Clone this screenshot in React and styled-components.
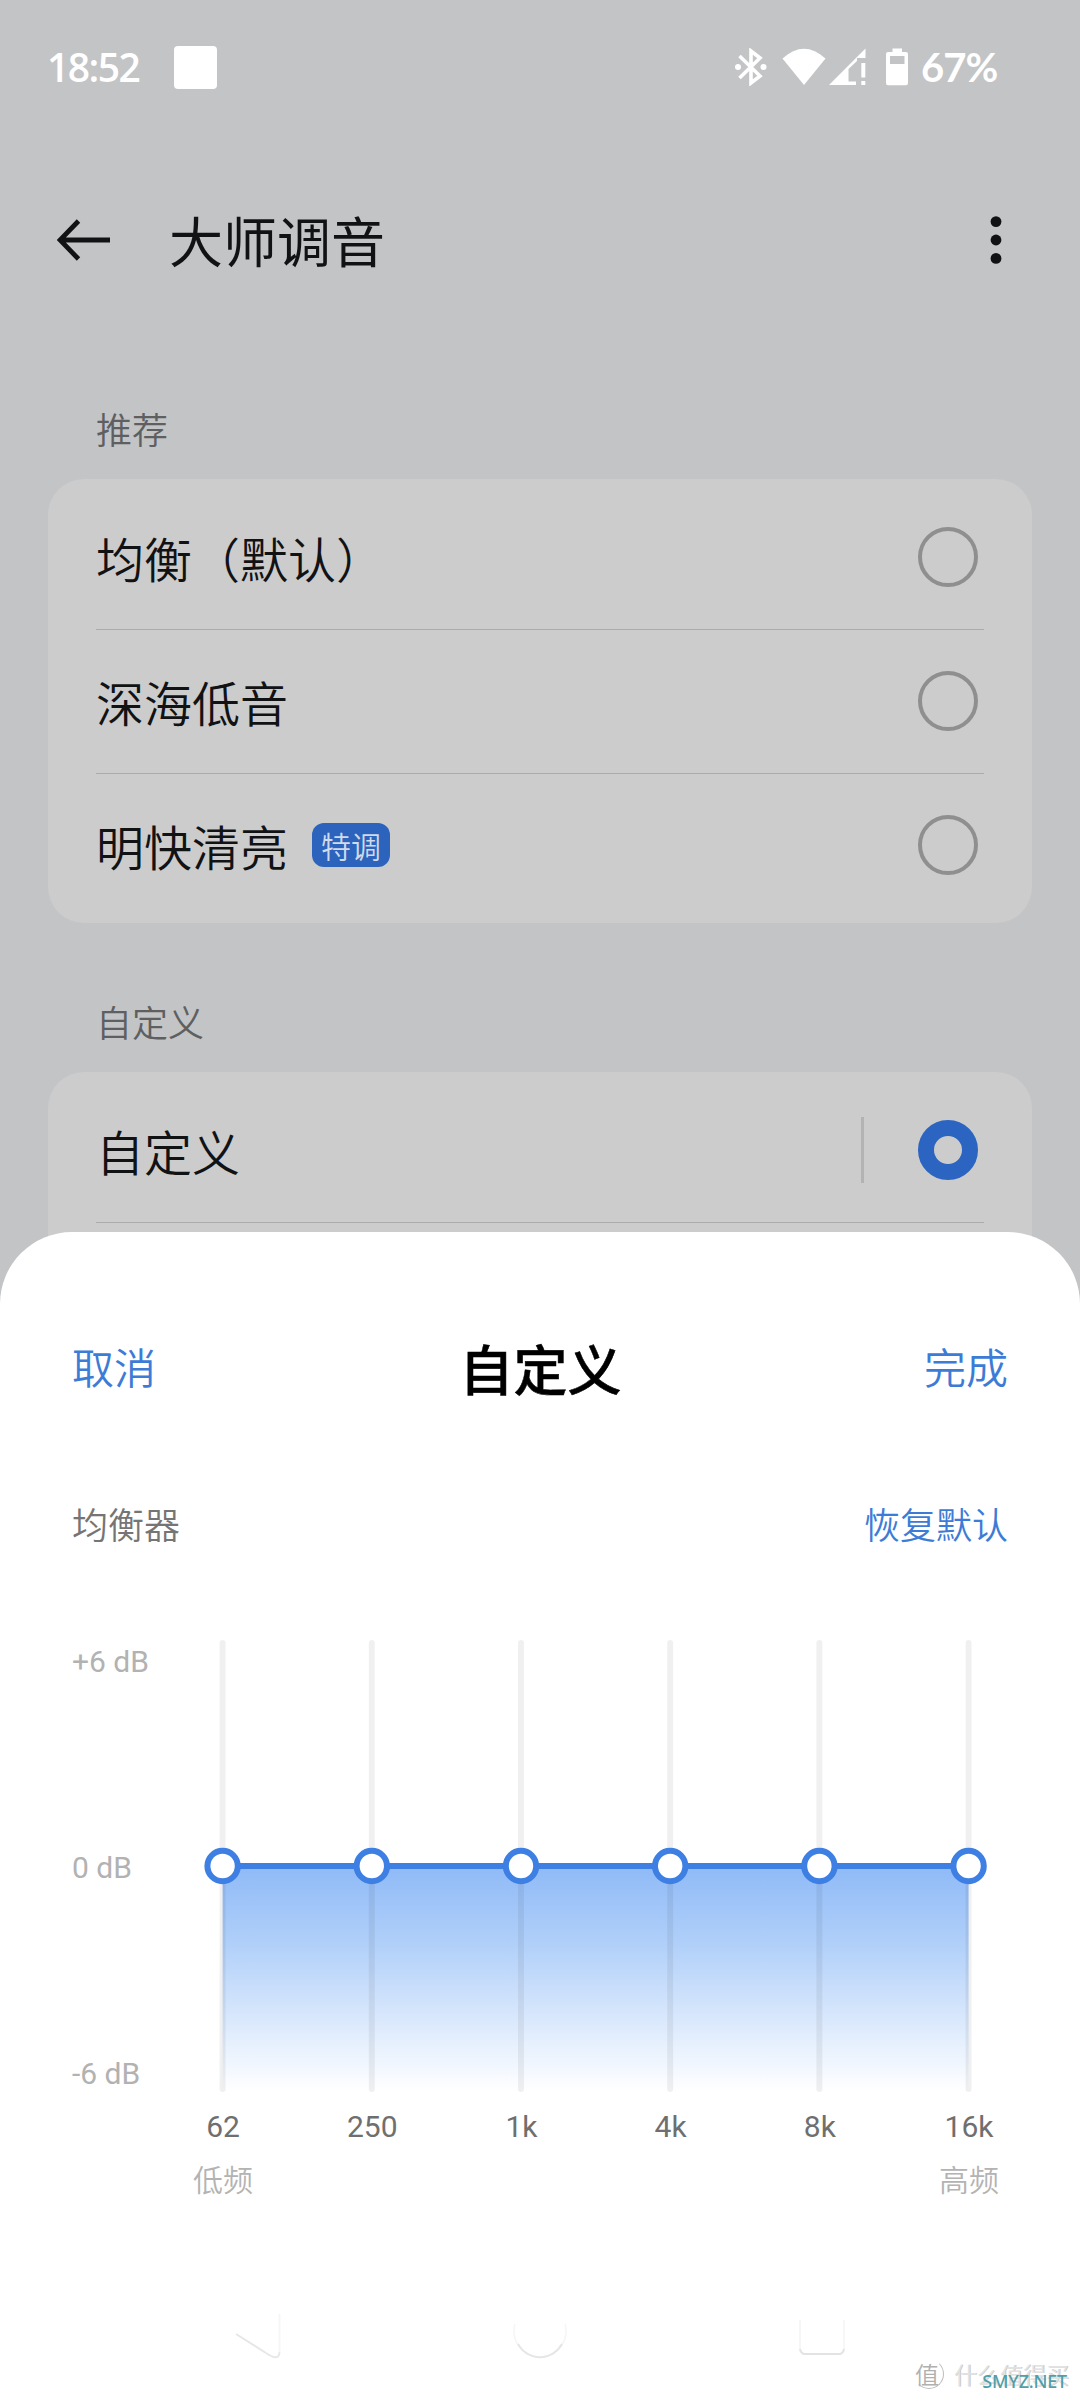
import React, { useState } from "react";
import styled, { createGlobalStyle, css } from "styled-components";

const presets = [
	{ id: "balance", name: "均衡（默认）" },
	{ id: "bass", name: "深海低音" },
	{ id: "bright", name: "明快清亮", tag: "特调" },
];

const bands = [
	{ freq: "62", gain: 0, hint: "低频" },
	{ freq: "250", gain: 0 },
	{ freq: "1k", gain: 0 },
	{ freq: "4k", gain: 0 },
	{ freq: "8k", gain: 0 },
	{ freq: "16k", gain: 0, hint: "高频" },
];

const BAND_WIDTH = 149.2;
const CHART_HEIGHT = 452;
const MAX_GAIN = 6;

const bandX = (index) => BAND_WIDTH * (index + 0.5);
const gainY = (gain) => CHART_HEIGHT / 2 - (gain / MAX_GAIN) * 206;

const BluetoothIcon = () => (
	<svg width="32" height="38" viewBox="0 0 32 38" fill="none">
		<path d="M4.5 8 L25 28 L16 35 V3 L25 10 L4.5 30" stroke="#fff" strokeWidth="3.6" />
		<circle cx="3" cy="19" r="3" fill="#fff" />
		<circle cx="28.5" cy="19" r="3" fill="#fff" />
	</svg>
);

const WifiIcon = () => (
	<svg width="44" height="38" viewBox="0 0 44 38">
		<path d="M0.5 10.5 Q22 -9 43.5 10.5 L22 37 Z" fill="#fff" />
	</svg>
);

const SignalIcon = () => (
	<svg width="37" height="38" viewBox="0 0 37 38" fill="#fff">
		<path d="M0 37 L36.5 0.5 V10 H28 V13 L19.5 21 V33.5 H27 V37 Z" />
		<rect x="32.3" y="15" width="4" height="14.5" />
		<rect x="32.3" y="33" width="4" height="4" />
	</svg>
);

const BatteryIcon = () => (
	<svg width="22" height="38" viewBox="0 0 22 38">
		<path
			fillRule="evenodd"
			d="M6.5 0.5 H16 V4 H20 Q22 4 22 6 V35 Q22 37.3 20 37.3 H2 Q0 37.3 0 35 V6 Q0 4 2 4 H6.5 Z M4 8 V16 H18.5 V8 Z"
			fill="#fff"
		/>
	</svg>
);

const BackIcon = () => (
	<svg width="54" height="42" viewBox="0 0 54 42" fill="none">
		<path d="M21.5 2 L3 21 L21.5 40 M3 21 H53" stroke="#111214" strokeWidth="4.8" />
	</svg>
);

const MoreIcon = () => (
	<svg width="12" height="50" viewBox="0 0 12 50" fill="#111214">
		<circle cx="6" cy="6.6" r="5.4" />
		<circle cx="6" cy="25" r="5.4" />
		<circle cx="6" cy="43.4" r="5.4" />
	</svg>
);

const Equalizer = () => {
	const width = BAND_WIDTH * bands.length;
	const line = bands.map((band, i) => `${bandX(i)},${gainY(band.gain)}`).join(" ");
	const area = `${bandX(0)},${CHART_HEIGHT} ${line} ${bandX(bands.length - 1)},${CHART_HEIGHT}`;

	return (
		<svg width={width} height={CHART_HEIGHT} viewBox={`0 0 ${width} ${CHART_HEIGHT}`}>
			<defs>
				<linearGradient id="gain" x1="0" y1="0" x2="0" y2="1">
					<stop offset="0" stopColor="#8fbaf7" />
					<stop offset="0.35" stopColor="#b1d0f9" />
					<stop offset="0.65" stopColor="#d6e6fc" />
					<stop offset="1" stopColor="#ffffff" />
				</linearGradient>
			</defs>
			<polygon points={area} fill="url(#gain)" />
			{bands.map((band, i) => (
				<rect
					key={band.freq}
					x={bandX(i) - 3}
					y="0"
					width="6"
					height={CHART_HEIGHT}
					rx="3"
					fill="#000"
					fillOpacity="0.06"
				/>
			))}
			<polyline points={line} fill="none" stroke="#3d7fe2" strokeWidth="6" />
			{bands.map((band, i) => (
				<circle
					key={band.freq}
					cx={bandX(i)}
					cy={gainY(band.gain)}
					r="15.2"
					fill="#fff"
					stroke="#3d7fe2"
					strokeWidth="6"
				/>
			))}
		</svg>
	);
};

const App = () => {
	const [selected, setSelected] = useState("custom");

	return (
		<Screen>
			<GlobalStyle />
			<StatusBar>
				<Clock>18:52</Clock>
				<Notification />
				<StatusIcons>
					<BluetoothIcon />
					<WifiIcon />
					<SignalIcon />
					<BatteryIcon />
				</StatusIcons>
				<BatteryLevel>67%</BatteryLevel>
			</StatusBar>
			<AppBar>
				<BackIcon />
				<PageTitle>大师调音</PageTitle>
				<MoreIcon />
			</AppBar>

			<SectionLabel $top={54}>推荐</SectionLabel>
			<Card>
				{presets.map((preset) => (
					<Row key={preset.id} onClick={() => setSelected(preset.id)}>
						<RowName>{preset.name}</RowName>
						{preset.tag && <Tag>{preset.tag}</Tag>}
						<Radio $checked={selected === preset.id} />
					</Row>
				))}
			</Card>

			<SectionLabel $top={71}>自定义</SectionLabel>
			<Card>
				<Row onClick={() => setSelected("custom")}>
					<RowName>自定义</RowName>
					<Separator />
					<Radio $checked={selected === "custom"} />
				</Row>
				<Row />
			</Card>

			<Sheet>
				<SheetHeader>
					<TextButton>取消</TextButton>
					<SheetTitle>自定义</SheetTitle>
					<TextButton>完成</TextButton>
				</SheetHeader>
				<SubHeader>
					<span>均衡器</span>
					<ResetButton>恢复默认</ResetButton>
				</SubHeader>
				<Chart>
					<Scale>
						<span>+6 dB</span>
						<span>0 dB</span>
						<span>-6 dB</span>
					</Scale>
					<Equalizer />
				</Chart>
				<Axis>
					{bands.map((band) => (
						<Band key={band.freq}>
							{band.freq}
							{band.hint && <Hint>{band.hint}</Hint>}
						</Band>
					))}
				</Axis>
				<NavBar>
					<svg width="54" height="64" viewBox="0 0 54 64" fill="none">
						<path d="M5 34 L35 53" stroke="#e6e6e6" strokeWidth="2" />
						<path d="M35 53 Q48 62 48.5 52" stroke="#e8e8e8" strokeWidth="2" />
						<path d="M48.5 52 V14" stroke="#f6f6f6" strokeWidth="2" />
					</svg>
					<svg width="54" height="64" viewBox="0 0 54 64" fill="none">
						<path d="M2 24 A25 25 0 0 0 6 46" stroke="#f5f5f5" strokeWidth="1.5" />
						<path d="M48 46 A25 25 0 0 0 52 24" stroke="#f5f5f5" strokeWidth="1.5" />
						<path d="M5 44 A25 25 0 0 0 49 44" stroke="#e6e6e6" strokeWidth="2" />
					</svg>
					<svg width="54" height="64" viewBox="0 0 54 64" fill="none">
						<path d="M5 20 V50 M49 20 V50" stroke="#f5f5f5" strokeWidth="1.5" />
						<path d="M5 49 Q6 54 10 54 H44 Q48 54 49 49" stroke="#e3e3e3" strokeWidth="2" />
					</svg>
				</NavBar>
			</Sheet>

			<Watermark>
				<Seal>值</Seal>
				<span>什么值得买</span>
				<Site>SMYZ.NET</Site>
			</Watermark>
		</Screen>
	);
};

export default App;

const GlobalStyle = createGlobalStyle`
	body {
		margin: 0;
		background-color: #c3c4c6;
		font-family: "Noto Sans CJK SC", sans-serif;
		font-weight: 350;
	}

	svg {
		display: block;
		flex-shrink: 0;
	}
`;

const Screen = styled.div`
	position: relative;
	width: 1080px;
	height: 2400px;
	overflow: hidden;
	background-color: #c3c4c6;
	color: #111214;
`;

const StatusBar = styled.div`
	box-sizing: border-box;
	display: flex;
	align-items: center;
	height: 133px;
	padding: 0 82px 0 47px;
	color: #fff;
	font-family: "Open Sans", sans-serif;
	font-size: 39px;
	font-weight: 600;
	line-height: 48px;
`;

const Clock = styled.div`
	width: 127px;
	letter-spacing: -1.5px;
`;

const Notification = styled.div`
	width: 43px;
	height: 43px;
	margin-top: 2px;
	border-radius: 4px;
	background-color: #fff;
`;

const StatusIcons = styled.div`
	display: flex;
	margin-left: auto;

	svg:nth-child(2) {
		margin-left: 15px;
	}

	svg:nth-child(3) {
		margin-left: 3px;
	}

	svg:nth-child(4) {
		margin-left: 20px;
	}
`;

const BatteryLevel = styled.div`
	width: 77px;
	margin-left: 13px;
	font-family: Lato, sans-serif;
	font-size: 40px;
	font-weight: 700;
	white-space: nowrap;
	letter-spacing: -1px;
`;

const AppBar = styled.div`
	display: flex;
	align-items: center;
	height: 214px;
	padding: 0 78px 0 57px;
`;

const PageTitle = styled.h1`
	flex: 1;
	margin: 0 0 0 58px;
	font-size: 54px;
	font-weight: 400;
	line-height: 80px;
`;

const SectionLabel = styled.div`
	padding: ${({ $top }) => $top}px 96px 24px;
	color: #5e5f61;
	font-size: 36px;
	line-height: 54px;
`;

const Card = styled.div`
	margin: 0 48px;
	padding: 6px 48px;
	border-radius: 36px;
	background-color: #ccc;
`;

const Row = styled.div`
	box-sizing: border-box;
	display: flex;
	align-items: center;
	height: 144px;
	padding-right: 6px;

	& + & {
		box-shadow: inset 0 1px 0 #acacac;
	}
`;

const RowName = styled.div`
	margin-right: auto;
	font-size: 48px;
	line-height: 72px;

	&:has(+ span) {
		margin-right: 24px;
	}
`;

const Tag = styled.span`
	box-sizing: border-box;
	width: 78px;
	height: 44px;
	margin-right: auto;
	padding-top: 1px;
	border-radius: 12px;
	background-color: #2c63bc;
	color: #cfdaea;
	font-size: 30px;
	line-height: 43px;
	text-align: center;
`;

const Separator = styled.div`
	width: 3px;
	height: 66px;
	margin-right: 54px;
	background-color: #b3b3b3;
`;

const Radio = styled.div`
	box-sizing: border-box;
	width: 60px;
	height: 60px;
	border: 4px solid #8f8f8f;
	border-radius: 50%;

	${({ $checked }) =>
		$checked &&
		css`
			border: 16.5px solid #2c64c1;
		`}
`;

const Sheet = styled.section`
	position: absolute;
	top: 1232px;
	right: 0;
	bottom: 0;
	left: 0;
	border-radius: 72px 72px 0 0;
	background-color: #fff;
`;

const SheetHeader = styled.header`
	display: flex;
	align-items: center;
	justify-content: space-between;
	height: 267px;
	padding: 0 72px;
`;

const TextButton = styled.button`
	padding: 0;
	border: none;
	background: none;
	color: #3d7cd6;
	font-family: inherit;
	font-size: 42px;
	font-weight: inherit;
	line-height: 60px;
`;

const SheetTitle = styled.h2`
	margin: 4px 0 0 1px;
	color: #000;
	font-size: 54px;
	font-weight: 500;
	line-height: 80px;
	-webkit-text-stroke: 0.5px #000;
`;

const SubHeader = styled.div`
	display: flex;
	align-items: center;
	justify-content: space-between;
	height: 48px;
	padding: 0 72px;
	color: #757575;
	font-size: 36px;
`;

const ResetButton = styled(TextButton)`
	font-size: 36px;
	line-height: 48px;
`;

const Chart = styled.div`
	display: flex;
	height: 452px;
	margin-top: 93px;
	padding-left: 72px;
`;

const Scale = styled.div`
	display: flex;
	flex-direction: column;
	justify-content: space-between;
	width: 76.2px;
	margin: 2px 0 -2px;
	color: #b2b2b2;
	font-family: Roboto, sans-serif;
	font-size: 30px;
	font-weight: 400;
	line-height: 40px;
	white-space: nowrap;
`;

const Axis = styled.div`
	display: flex;
	height: 91px;
	margin-top: 15px;
	padding-left: 148.5px;
`;

const Band = styled.div`
	width: ${BAND_WIDTH}px;
	color: #6f6f6f;
	font-family: Roboto, sans-serif;
	font-size: 30px;
	font-weight: 400;
	line-height: 40px;
	text-align: center;
`;

const Hint = styled.div`
	margin-top: 11px;
	color: #b3b3b3;
	font-family: "Noto Sans CJK SC", sans-serif;
	font-weight: 350;
`;

const NavBar = styled.nav`
	display: grid;
	grid-template-columns: repeat(3, 282px);
	justify-content: center;
	justify-items: center;
	margin-top: 102px;
`;

const Watermark = styled.div`
	position: absolute;
	right: 11px;
	bottom: 10px;
	display: flex;
	align-items: center;
	gap: 10px;
	color: #e2e2e2;
	font-size: 23px;
	line-height: 32px;
	text-shadow: 1px 0 0 #c8c8c8;
`;

const Seal = styled.span`
	width: 28px;
	border: 1px solid #bdbdbd;
	border-top-color: transparent;
	border-left-color: transparent;
	border-radius: 50%;
	color: #b0b0b0;
	font-size: 24px;
	line-height: 28px;
	text-align: center;
	text-indent: -4px;
	text-shadow: none;
`;

const Site = styled.span`
	position: absolute;
	right: 2px;
	bottom: -3px;
	color: #4f9fa8;
	font-family: "Noto Sans", sans-serif;
	font-size: 18px;
	font-weight: 500;
	line-height: 24px;
	letter-spacing: -0.2px;
	text-shadow: none;
`;
